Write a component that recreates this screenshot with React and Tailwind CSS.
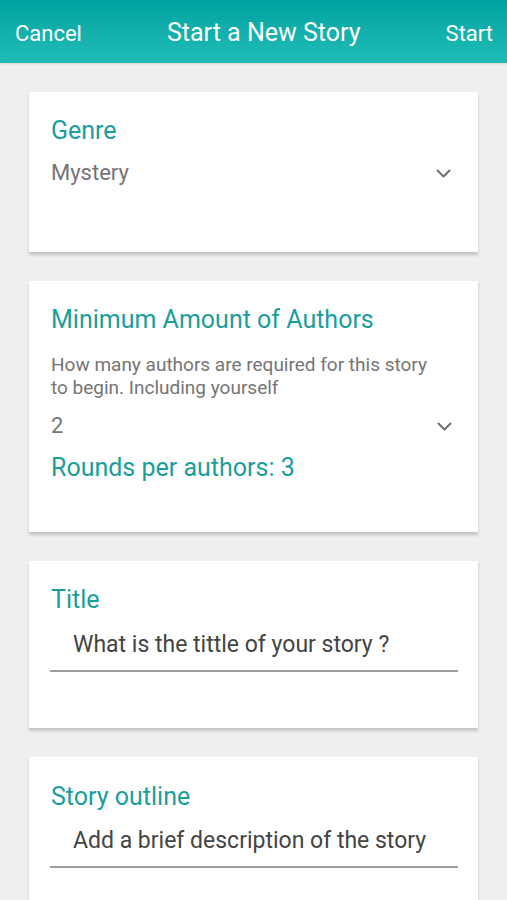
import React from "react";

const Chevron = () => (
  <svg width="15" height="9" viewBox="0 0 15 9" fill="none" stroke="#707070" strokeWidth="2" strokeLinecap="round" strokeLinejoin="round">
    <path d="M1.5 1.5l6 6 6-6" />
  </svg>
);

function Card({ children, className = "" }) {
  return (
    <div className={`bg-white mx-[29px] px-[21px] shadow-[0_3px_3px_rgba(0,0,0,0.18)] ${className}`}>
      {children}
    </div>
  );
}

export default function App() {
  return (
    <div className="min-h-[900px] bg-[#efefef] overflow-hidden" style={{ fontFamily: "Roboto, 'Noto Sans', sans-serif" }}>
      <div className="h-[63px] bg-gradient-to-b from-[#00a29f] to-[#1fbcb8] flex items-center justify-between pl-[15px] pr-[14px] pt-[3px] text-white shadow-[0_1px_2px_rgba(0,0,0,0.1)]">
        <span className="text-[22px]">Cancel</span>
        <span className="text-[25px]">Start a New Story</span>
        <span className="text-[22px]">Start</span>
      </div>

      <div className="flex flex-col gap-[29px] pt-[29px]">
        <Card className="h-[160px] pt-[24px]">
          <div className="text-[25px] text-[#1a9e9b] leading-[30px] pl-[1px]">Genre</div>
          <div className="flex items-center justify-between mt-[14px] pr-[6px] pl-[1px]">
            <span className="text-[22px] text-[#757575] leading-[26px]">Mystery</span>
            <Chevron />
          </div>
        </Card>

        <Card className="h-[251px] pt-[24px] pl-[22px]">
          <div className="text-[25px] text-[#1a9e9b] leading-[30px]">Minimum Amount of Authors</div>
          <div className="text-[19px] text-[#757575] leading-[23px] mt-[18px]">
            How many authors are required for this story
            <br />
            to begin. Including yourself
          </div>
          <div className="flex items-center justify-between mt-[14px] pr-[5px]">
            <span className="text-[22px] text-[#757575] leading-[26px]">2</span>
            <Chevron />
          </div>
          <div className="text-[25px] text-[#1a9e9b] leading-[30px] mt-[14px]">Rounds per authors: 3</div>
        </Card>

        <Card className="h-[167px] pt-[24px]">
          <div className="text-[25px] text-[#1a9e9b] leading-[30px] pl-[1px]">Title</div>
          <div className="mt-[17px] border-b-2 border-[#9e9e9e] pl-[23px] pb-[12px] mr-[-1px]">
            <span className="text-[23px] text-[#444444] leading-[26px] block">What is the tittle of your story ?</span>
          </div>
        </Card>

        <Card className="h-[160px] pt-[25px]">
          <div className="text-[25px] text-[#1a9e9b] leading-[30px] pl-[1px]">Story outline</div>
          <div className="mt-[16px] border-b-2 border-[#9e9e9e] pl-[23px] pb-[12px] mr-[-1px]">
            <span className="text-[23px] text-[#444444] leading-[26px] block">Add a brief description of the story</span>
          </div>
        </Card>
      </div>
    </div>
  );
}
